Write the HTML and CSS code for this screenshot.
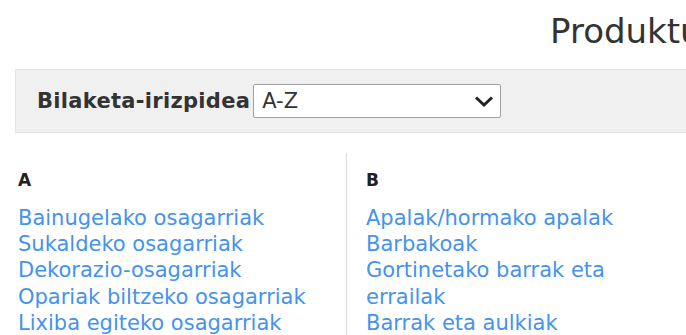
FILE: index.html
```html
<!DOCTYPE html>
<html lang="eu">
<head>
  <meta charset="UTF-8">
  <title>Produktuak</title>
  <link rel="stylesheet" href="styles.css">
</head>
<body>
  <div class="page">
    <h1 class="title">Produktuak</h1>

    <!-- Sort bar -->
    <div class="filter-bar">
      <label for="sort">Bilaketa-irizpidea</label>
      <div class="select">
        <span class="select-value">A-Z</span>
        <svg class="chevron" width="20" height="13" viewBox="0 0 20 13">
          <path d="M2 2.5 L10 10 L18 2.5" fill="none" stroke="#222" stroke-width="3"/>
        </svg>
      </div>
    </div>

    <!-- Letter columns -->
    <div class="columns">
      <div class="column">
        <h3>A</h3>
        <ul>
          <li><a href="#">Bainugelako osagarriak</a></li>
          <li><a href="#">Sukaldeko osagarriak</a></li>
          <li><a href="#">Dekorazio-osagarriak</a></li>
          <li><a href="#">Opariak biltzeko osagarriak</a></li>
          <li><a href="#">Lixiba egiteko osagarriak</a></li>
        </ul>
      </div>
      <div class="column">
        <h3>B</h3>
        <ul>
          <li><a href="#">Apalak/hormako apalak</a></li>
          <li><a href="#">Barbakoak</a></li>
          <li><a href="#">Gortinetako barrak eta errailak</a></li>
          <li><a href="#">Barrak eta aulkiak</a></li>
        </ul>
      </div>
    </div>
  </div>
</body>
</html>
```

FILE: styles.css
```css
* {
  box-sizing: border-box;
}

body {
  margin: 0;
  font-family: 'DejaVu Sans', Verdana, sans-serif;
  color: #333;
  background: #fff;
  overflow: hidden;
}

.page {
  width: 900px;
  padding-left: 15px;
}

.title {
  margin: 0;
  padding: 11px 0 0 535px;
  height: 69px;
  font-size: 34px;
  font-weight: normal;
  color: #333;
  white-space: nowrap;
}

.filter-bar {
  display: flex;
  align-items: center;
  height: 64px;
  padding-left: 21px;
  background: #f0f0f0;
  border: 1px solid #e4e4e4;
}

.filter-bar label {
  font-size: 21px;
  font-weight: bold;
  letter-spacing: 0.3px;
  color: #333;
  margin-right: 3px;
}

.select {
  display: flex;
  align-items: center;
  justify-content: space-between;
  width: 248px;
  height: 34px;
  padding: 0 6px 0 8px;
  background: #fff;
  border: 1px solid #a0a0a0;
  border-radius: 2px;
}

.select-value {
  font-size: 21px;
  color: #333;
}

.columns {
  display: flex;
  margin-top: 20px;
}

.column {
  width: 331px;
  padding-left: 3px;
}

.column + .column {
  width: 330px;
  padding: 0 30px 0 19px;
  border-left: 1px solid #dcdcdc;
}

.column h3 {
  margin: 17px 0 15px;
  font-size: 17px;
  font-weight: bold;
  color: #222;
}

.column ul {
  list-style: none;
  margin: 0;
  padding: 0;
}

.column li {
  font-size: 21px;
  line-height: 26.2px;
}

.column a {
  color: #4593ec;
  text-decoration: none;
}
```
